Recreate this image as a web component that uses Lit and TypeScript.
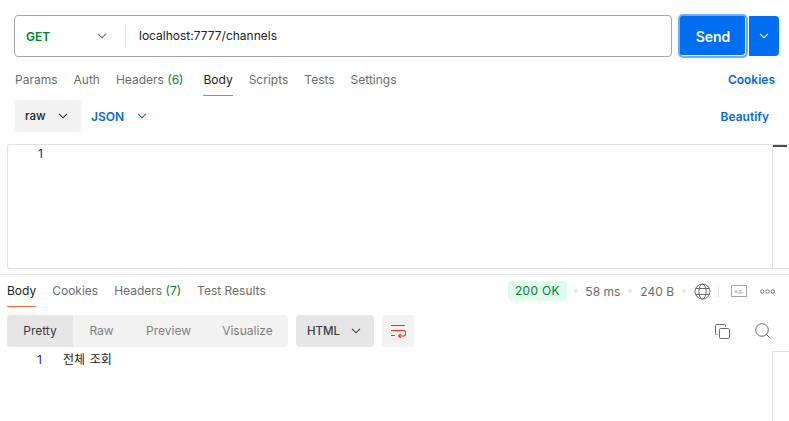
import { LitElement, html, css } from "lit";
import { customElement } from "lit/decorators.js";

const chev = (c: string, w = 10) => html`<svg class="chev" width=${w} height="6" viewBox="0 0 10 6" fill="none"><path d="M1 .8 5 4.8 9 .8" stroke=${c} stroke-width="1.1"/></svg>`;

@customElement("app-root")
export class AppRoot extends LitElement {
  static styles = css`
    :host { display: block; width: 789px; height: 421px; overflow: hidden; background: #fff; font-family: Inter, "Noto Sans CJK KR", sans-serif; font-size: 12px; color: #6b6b6b; }
    .urlrow { display: flex; padding: 15px 10px 0 14px; height: 42px; }
    .urlbox { width: 658px; height: 42px; box-sizing: border-box; border: 1px solid #a6a6a6; border-radius: 4px; display: flex; align-items: center; }
    .method { width: 110px; padding-left: 11px; box-sizing: border-box; display: flex; align-items: center; font-weight: 600; color: #007f31; }
    .method .chev { margin-left: 47px; }
    .url { border-left: 1px solid #e2e2e2; height: 24px; line-height: 24px; padding-left: 13px; color: #212121; font-size: 12px; }
    .send { margin: -1px 0 0 6px; width: 70px; height: 44px; box-sizing: border-box; background: #006ef0; border: 2px solid #6fadf7; border-radius: 5px; box-shadow: inset -1px -1px 0 #fff; color: #fff; font-weight: 600; font-size: 14px; display: flex; align-items: center; justify-content: center; }
    .more { margin-left: 1px; margin-top: 1px; width: 30px; height: 40px; background: #006ef0; border-radius: 0 4px 4px 0; display: flex; align-items: center; justify-content: center; }
    .tabs { display: flex; align-items: flex-start; }
    .reqtabs { padding: 13px 14px 0 15px; height: 26px; gap: 16px; }
    .tab { height: 26px; line-height: 20px; box-sizing: border-box; }
    .tab.on { color: #212121; border-bottom: 1px solid #ff6c37; }
    .tab.hl { margin-right: 4px; }
    .green { color: #007f31; }
    .cookies { margin-left: auto; color: #0a66d8; font-weight: 600; font-size: 12px; line-height: 20px; }
    .bodyrow { display: flex; align-items: center; padding: 4px 20px 0 15px; height: 32px; }
    .select { display: flex; align-items: center; background: #f2f2f2; border-radius: 4px; height: 32px; box-sizing: border-box; }
    .raw { width: 66px; padding-left: 10px; color: #212121; font-weight: 500; font-size: 11.5px; }
    .raw .chev { margin-left: 13px; }
    .json { margin-left: 10px; color: #0a66d8; font-weight: 600; display: flex; align-items: center; }
    .json .chev { margin-left: 13px; }
    .beautify { margin-left: auto; color: #0a66d8; font-weight: 600; font-size: 12px; }
    .editor { margin: 12px 0 0 7px; height: 125px; box-sizing: border-box; border: 1px solid #e2e2e2; border-right: 0; border-radius: 3px 0 0 3px; display: flex; }
    .ln { width: 35px; text-align: right; padding-top: 1px; line-height: 16px; color: #23238e; font-size: 12px; }
    .scroll { margin-left: auto; width: 16px; border-left: 1px solid #e2e2e2; }
    .thumb { height: 2px; width: 14px; background: #4a4a4a; }
    .divider { height: 1px; background: #e8e8e8; margin-top: 5px; }
    .restop { display: flex; height: 32px; align-items: flex-start; padding: 0 0 0 7px; }
    .resptabs { gap: 16px; padding-top: 6px; }
    .rtab { height: 26px; line-height: 20px; box-sizing: border-box; }
    .rtab.on { color: #212121; border-bottom: 1px solid #ff6c37; }
    .stats { margin-left: auto; display: flex; align-items: center; height: 20px; margin-top: 6px; padding-right: 14px; white-space: nowrap; }
    .ok { background: #e0fbec; color: #007f31; border-radius: 4px; height: 20px; line-height: 20px; width: 59px; text-align: center; font-size: 12px; letter-spacing: .3px; }
    .dot { width: 4px; height: 4px; border-radius: 50%; background: #e6e6e6; margin: 0 8px; }
    .dot.tight { margin: 0 7.5px 0 7px; }
    .vsep { width: 1px; height: 12px; background: #e2e2e2; margin: 0 12px 0 7px; }
    .eg { margin-right: 13px; }
    .viewrow { display: flex; align-items: center; margin-top: 8px; padding-left: 7px; height: 32px; }
    .seg { display: flex; width: 281px; height: 32px; background: #f2f2f2; border-radius: 4px; overflow: hidden; }
    .seg span { line-height: 32px; text-align: center; color: #7f7f7f; }
    .seg .on { background: #e6e6e6; color: #3b3b3b; }
    .s1 { width: 66px; } .s2 { width: 57px; } .s3 { width: 77px; } .s4 { width: 81px; }
    .html { margin-left: 8px; width: 78px; background: #e6e6e6; padding-left: 11px; color: #3b3b3b; font-size: 11.5px; font-weight: 500; }
    .html .chev { margin-left: 11px; }
    .wrap { margin-left: 8px; width: 32px; height: 32px; background: #f2f2f2; border-radius: 4px; display: flex; align-items: center; justify-content: center; }
    .tools { margin-left: auto; display: flex; gap: 25px; padding-right: 18px; align-items: center; }
    .out { display: flex; height: 74px; }
    .ln2 { width: 42px; text-align: right; padding-top: 5px; font-size: 12px; line-height: 16px; color: #23238e; }
    .txt { margin-left: 21px; padding-top: 4px; line-height: 16px; font-size: 12px; color: #212121; font-family: "Noto Sans CJK KR", sans-serif; word-spacing: 2px; }
    .scroll2 { margin-left: auto; margin-top: 4px; width: 16px; border-left: 1px solid #e2e2e2; border-top: 1px solid #e2e2e2; }
  `;

  render() {
    return html`
      <div class="urlrow">
        <div class="urlbox">
          <div class="method">GET ${chev("#6b6b6b")}</div>
          <div class="url">localhost:7777/channels</div>
        </div>
        <div class="send">Send</div>
        <div class="more">${chev("#fff")}</div>
      </div>
      <div class="tabs reqtabs">
        <div class="tab">Params</div>
        <div class="tab">Auth</div>
        <div class="tab hl">Headers <span class="green">(6)</span></div>
        <div class="tab on">Body</div>
        <div class="tab">Scripts</div>
        <div class="tab">Tests</div>
        <div class="tab">Settings</div>
        <div class="cookies">Cookies</div>
      </div>
      <div class="bodyrow">
        <div class="select raw">raw ${chev("#212121")}</div>
        <div class="json">JSON ${chev("#0a66d8")}</div>
        <div class="beautify">Beautify</div>
      </div>
      <div class="editor">
        <div class="ln">1</div>
        <div class="scroll"><div class="thumb"></div></div>
      </div>
      <div class="divider"></div>
      <div class="restop">
        <div class="tabs resptabs">
          <div class="rtab on">Body</div>
          <div class="rtab">Cookies</div>
          <div class="rtab">Headers <span class="green">(7)</span></div>
          <div class="rtab">Test Results</div>
        </div>
        <div class="stats">
          <div class="ok">200 OK</div>
          <div class="dot tight"></div>
          <div>58 ms</div>
          <div class="dot"></div>
          <div>240 B</div>
          <div class="dot"></div>
          <svg width="17" height="17" viewBox="0 0 17 17" fill="none" stroke="#6b6b6b" stroke-width="1"><circle cx="8.5" cy="8.5" r="7.5"/><ellipse cx="8.5" cy="8.5" rx="3.6" ry="7.5"/><path d="M1.6 5.5h13.8M1.6 11.5h13.8"/></svg>
          <div class="vsep"></div>
          <svg class="eg" width="16" height="12" viewBox="0 0 16 12"><rect x=".5" y=".5" width="15" height="11" fill="none" stroke="#a6a6a6"/><text x="8" y="8" font-size="6" text-anchor="middle" fill="#8a8a8a" font-family="Liberation Serif, serif">e.g.</text></svg>
          <svg width="15" height="5" viewBox="0 0 15 5" fill="none" stroke="#6b6b6b" stroke-width=".9"><circle cx="2.2" cy="2.5" r="1.7"/><circle cx="7.5" cy="2.5" r="1.7"/><circle cx="12.8" cy="2.5" r="1.7"/></svg>
        </div>
      </div>
      <div class="viewrow">
        <div class="seg">
          <span class="s1 on">Pretty</span><span class="s2">Raw</span><span class="s3">Preview</span><span class="s4">Visualize</span>
        </div>
        <div class="select html">HTML ${chev("#3b3b3b")}</div>
        <div class="wrap">
          <svg width="16" height="14" viewBox="0 0 16 14" fill="none" stroke="#e8340c" stroke-width="1.1"><path d="M1 1.5h14M1 6.5h12.2a2 2 0 0 1 0 5.5H9M1 11.5h4M10.8 9.8 8.6 12l2.2 2"/></svg>
        </div>
        <div class="tools">
          <svg width="15" height="15" viewBox="0 0 15 15" fill="none" stroke="#6b6b6b" stroke-width="1"><rect x="4.5" y="4.5" width="10" height="10" rx="1.2"/><path d="M2.5 10.5h-.8a1.2 1.2 0 0 1-1.2-1.2V1.7A1.2 1.2 0 0 1 1.7.5h7.6a1.2 1.2 0 0 1 1.2 1.2v.8"/></svg>
          <svg width="16" height="16" viewBox="0 0 16 16" fill="none" stroke="#6b6b6b" stroke-width="1"><circle cx="7" cy="7" r="6.3"/><path d="M11.6 11.6l3.6 3.6"/></svg>
        </div>
      </div>
      <div class="out">
        <div class="ln2">1</div>
        <div class="txt">전체 조회</div>
        <div class="scroll2"></div>
      </div>
    `;
  }
}
